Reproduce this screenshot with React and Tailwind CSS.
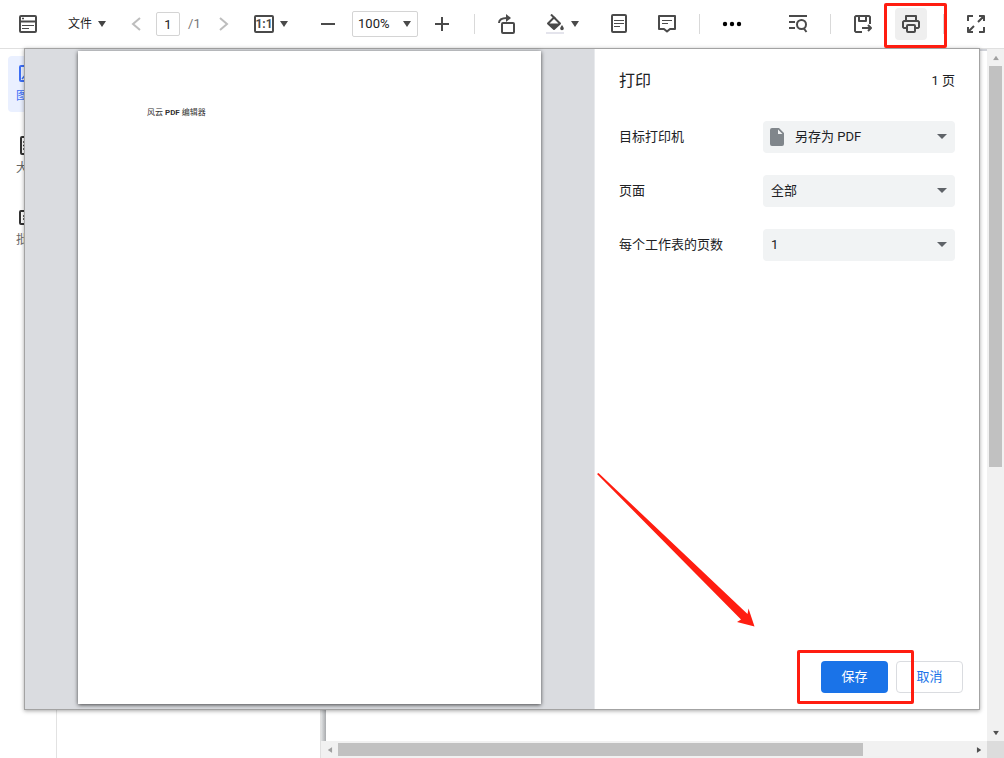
import { useState } from 'react';
import clsx from 'clsx';

const Icon = ({ children, className }) => (
  <svg viewBox="0 0 20 20" fill="none" stroke="currentColor" strokeWidth="2" strokeLinejoin="round"
    className={clsx('w-5 h-5 shrink-0', className)} aria-hidden="true">{children}</svg>
);

const Caret = ({ className }) => (
  <svg viewBox="0 0 8 6" className={clsx('w-2 h-1.5 shrink-0', className)} fill="currentColor" aria-hidden="true">
    <path d="M0 0h8L4 6z" />
  </svg>
);

const ToolButton = ({ label, children, className }) => (
  <button aria-label={label} className={clsx('w-8 h-8 shrink-0 flex items-center justify-center rounded', className)}>{children}</button>
);

const Divider = () => <span className="w-px h-5 bg-[#d9d9d9] shrink-0" />;

function Toolbar() {
  const [page, setPage] = useState('1');
  return (
    <header className="relative z-20 h-12 shrink-0 px-3 flex items-center justify-between text-[#4a4a4a]">
      <div className="flex items-center gap-4">
        <ToolButton label="侧边栏">
          <Icon><rect x="2" y="2" width="16" height="16" rx="1" /><path d="M2 7.5h16" /><path d="M4 11.5h12M4 14.5h7" strokeWidth="1" /><path d="M4 4.5h2" strokeWidth="1.5" /></Icon>
        </ToolButton>
        <div className="flex items-center gap-2">
          <button className="h-8 pl-2 pr-1.5 flex items-center gap-1.5 text-xs text-[#222]">文件<Caret className="text-[#444]" /></button>
          <div className="flex items-center gap-1">
            <ToolButton label="上一页" className="text-[#bdbdbd]"><Icon><path d="M14 4l-7 6 7 6" strokeLinejoin="miter" /></Icon></ToolButton>
            <input aria-label="页码" value={page} onChange={e => setPage(e.target.value)}
              className="w-6 h-6 border border-[#d4d4d4] rounded-xs text-center text-[13px] text-[#222]" />
            <span className="w-5 pl-1 text-[13px] text-[#777]">/1</span>
            <ToolButton label="下一页" className="text-[#bdbdbd]"><Icon><path d="M6 4l7 6-7 6" strokeLinejoin="miter" /></Icon></ToolButton>
          </div>
        </div>
        <div className="flex items-center gap-5 -ml-2">
          <button aria-label="实际大小" className="w-11 h-8 px-1.5 flex items-center gap-1.5">
            <span className="w-5 h-[18px] shrink-0 border-2 border-[#4a4a4a] rounded-xs flex items-center justify-center text-xs leading-none font-bold">1:1</span>
            <Caret />
          </button>
          <div className="flex items-center gap-2">
            <ToolButton label="缩小"><Icon><path d="M3 10h14" /></Icon></ToolButton>
            <div className="relative">
              <select aria-label="缩放" className="block w-[66px] h-[26px] pl-[5px] border border-[#d4d4d4] rounded-xs appearance-none text-[13px] text-[#222]">
                <option>100%</option>
              </select>
              <Caret className="absolute right-[7px] top-[10px] pointer-events-none" />
            </div>
            <ToolButton label="放大"><Icon><path d="M3 10h14M10 3v14" /></Icon></ToolButton>
          </div>
        </div>
        <Divider />
        <ToolButton label="旋转">
          <Icon>
            <rect x="5" y="9" width="12" height="10" rx="1" />
            <path d="M2 9c0-3 3-5 8-5" />
            <path d="M9 0l5 4-5 4z" fill="currentColor" stroke="none" />
          </Icon>
        </ToolButton>
        <button aria-label="背景颜色" className="w-11 h-8 px-1.5 flex items-center gap-1.5">
          <Icon>
            <path d="M9 3.5l6 6L9 15 3 9.500z" />
            <path d="M3 9.5h12L9 15z" fill="currentColor" stroke="none" />
            <path d="M6 .5l4 4" />
            <path d="M17 11c1 1.5 1.8 2.5 1.8 3.5a1.8 1.8 0 0 1-3.6 0c0-1 .8-2 1.8-3.5z" fill="currentColor" stroke="none" />
            <path d="M1 19h18" stroke="#e4e4ec" />
          </Icon>
          <Caret />
        </button>
        <div className="flex items-center gap-4 pl-1">
          <ToolButton label="单页"><Icon><rect x="3" y="1" width="14" height="17" rx="1" /><path d="M5 6.5h10M5 9.5h10M5 12.5h6" strokeWidth="1.2" /></Icon></ToolButton>
          <ToolButton label="注释"><Icon><path d="M2 2h16v13h-5l-3 2.5L7 15H2z" /><path d="M5 6.5h10M5 9.5h6" strokeWidth="1.2" /></Icon></ToolButton>
        </div>
        <Divider />
        <ToolButton label="更多" className="text-black">
          <Icon><g fill="currentColor" stroke="none"><circle cx="3" cy="10" r="2.2" /><circle cx="10" cy="10" r="2.2" /><circle cx="17" cy="10" r="2.2" /></g></Icon>
        </ToolButton>
      </div>

      <div className="flex items-center gap-4">
        <ToolButton label="查找"><Icon><path d="M1 2h18M1 8h6M1 14h6M15.5 14l3 4" /><circle cx="13.5" cy="10.5" r="4.5" /></Icon></ToolButton>
        <Divider />
        <ToolButton label="另存为"><Icon><path d="M9 18H3l-1-1V3l1-1h13l1 1v7M6 2v5h7V2M9 14h9" /><path d="M15 11l3 3-3 3" /></Icon></ToolButton>
        <div className="relative">
          <ToolButton label="打印" className="bg-[#efefef]">
            <Icon><path d="M5 7V2h10v5M5 14H3l-1-1V8l1-1h14l1 1v5l-1 1h-2" /><rect x="6" y="11" width="8" height="7" rx="1" /></Icon>
          </ToolButton>
          <span className="absolute -left-[11px] -right-5 -top-[5px] -bottom-2 border-3 border-[#ff1d10] rounded-xs pointer-events-none" />
        </div>
        <Divider />
        <ToolButton label="全屏"><Icon><path d="M2 7V2h5M18 13v5h-5M13 2h5v5M18 2l-6 6M7 18H2v-5M2 18l6-6" /></Icon></ToolButton>
      </div>
    </header>
  );
}

const tabs = [
  { label: '图片', active: true, icon: <><rect x="2" y="2" width="16" height="15" rx="1" /><path d="M4 15l5-6 3 4 2-2 3 4" strokeWidth="1.5" /></> },
  { label: '大纲', icon: <><rect x="3" y="1" width="14" height="17" rx="1" /><path d="M5 6h10M5 9.5h10M5 13h10" strokeWidth="1.5" /></> },
  { label: '批注', icon: <><rect x="2" y="3" width="16" height="13" rx="1" /><path d="M5 8h10M5 11h7" strokeWidth="1.5" /></> },
];

function Sidebar() {
  return (
    <nav className="w-[57px] shrink-0 border-r border-[#e2e2e2] px-2 pt-[7px] flex flex-col gap-4">
      {tabs.map(t => (
        <button key={t.label} className={clsx('h-14 shrink-0 rounded flex flex-col items-center justify-center gap-1 text-xs',
          t.active ? 'bg-[#eaf0ff] text-[#3d6ff5]' : 'text-[#666]')}>
          <Icon className={t.active ? '' : 'text-[#333]'}>{t.icon}</Icon>
          {t.label}
        </button>
      ))}
    </nav>
  );
}

function Viewer() {
  return (
    <main className="flex-1 min-w-0 flex">
      <div className="flex-1 min-w-0 flex flex-col">
        <div className="flex-1 border-t-2 border-[#d0d2d8] flex">
          <div className="w-[5px] bg-gradient-to-r from-[#e2e4e5] to-[#a9abae]" />
        </div>
        <div className="h-[17px] shrink-0 bg-[#f1f1f1] flex items-center">
          <span className="w-[17px] flex justify-center text-[#a0a0a0]"><Caret className="rotate-90 scale-75" /></span>
          <div className="flex-1 h-[13px]"><div className="w-[83%] h-full bg-[#c1c1c1]" /></div>
          <span className="w-[17px] flex justify-center text-[#505050]"><Caret className="-rotate-90 scale-75" /></span>
        </div>
      </div>
      <div className="w-[17px] shrink-0 bg-[#f1f1f1] flex flex-col items-center">
        <span className="h-[17px] flex items-center text-[#a0a0a0]"><Caret className="rotate-180 scale-75" /></span>
        <div className="flex-1 w-[13px]"><div className="h-[61%] w-full bg-[#c1c1c1]" /></div>
        <span className="h-[17px] flex items-center text-[#505050]"><Caret className="scale-75" /></span>
        <div className="h-[17px] w-full bg-[#dcdcdc]" />
      </div>
    </main>
  );
}

const fields = [
  { id: 'printer', label: '目标打印机', value: '另存为 PDF', file: true },
  { id: 'pages', label: '页面', value: '全部' },
  { id: 'per-sheet', label: '每个工作表的页数', value: '1' },
];

function PrintDialog() {
  return (
    <section role="dialog" aria-label="打印"
      className="absolute z-10 inset-x-6 inset-y-12 flex border border-[#a3a3a3] bg-white shadow-[0_1px_4px_rgba(0,0,0,0.35)]">
      <div className="flex-1 min-w-0 bg-[#dadce0] px-[53px] pt-0.5 pb-[5px] flex">
        <article className="flex-1 bg-white px-[69px] pt-14 shadow-[0_1px_4px_rgba(0,0,0,0.7)]">
          <p className="text-[8px] leading-3 text-[#333]">风云 <b>PDF</b> 编辑器</p>
        </article>
      </div>
      <form onSubmit={e => e.preventDefault()} className="relative w-[385px] shrink-0 border-l border-[#e8eaed] flex flex-col text-[13px] text-[#202124]">
        <div className="h-[72px] px-6 pb-2 flex items-center justify-between">
          <h1 className="text-base">打印</h1>
          <span>1 页</span>
        </div>
        <div className="px-6 flex flex-col gap-[22px]">
          {fields.map(f => (
            <div key={f.id} className="flex items-center justify-between">
              <label htmlFor={f.id}>{f.label}</label>
              <div className="relative">
                <select id={f.id} className={clsx('block w-48 h-8 rounded bg-[#f1f3f4] appearance-none', f.file ? 'pl-8' : 'pl-2')}>
                  <option>{f.value}</option>
                </select>
                {f.file && (
                  <svg viewBox="0 0 14 18" className="absolute left-[7px] top-[7px] w-3.5 h-[18px] pointer-events-none" fill="#80868b" aria-hidden="true">
                    <path d="M2 0h7l5 5v11a2 2 0 0 1-2 2H2a2 2 0 0 1-2-2V2a2 2 0 0 1 2-2zm6 1.5V6h4.5z" fillRule="evenodd" />
                  </svg>
                )}
                <svg viewBox="0 0 10 5" className="absolute right-2 top-[13px] w-2.5 h-[5px] pointer-events-none" fill="#5f6368" aria-hidden="true"><path d="M0 0h10L5 5z" /></svg>
              </div>
            </div>
          ))}
        </div>
        <svg viewBox="0 0 158 154" className="absolute left-0.5 bottom-[82px] w-[158px] h-[154px] pointer-events-none" fill="#ff1d10" aria-hidden="true">
          <path d="M0 1L1.5 0 150.5 141l1-5.5 6 18-17.5-4.5 4-2.500z" />
        </svg>
        <div className="mt-auto p-4 flex justify-end gap-2">
          <div className="relative">
            <button type="submit" className="block w-[67px] h-8 rounded bg-[#1a73e8] text-white">保存</button>
            <span className="absolute z-10 -inset-y-[11px] -left-6 -right-[26px] border-3 border-[#ff1d10] rounded-xs pointer-events-none" />
          </div>
          <button type="button" className="w-[67px] h-8 rounded border border-[#dadce0] text-[#1a73e8]">取消</button>
        </div>
      </form>
    </section>
  );
}

export default function App() {
  return (
    <div className="relative h-screen flex flex-col overflow-hidden bg-white font-[Roboto,'Noto_Sans_CJK_SC',sans-serif]">
      <Toolbar />
      <div className="flex-1 min-h-0 flex border-t border-[#e0e0e0]">
        <Sidebar />
        <aside className="w-[264px] shrink-0 border-r border-[#e0e0e0]" />
        <Viewer />
      </div>
      <PrintDialog />
    </div>
  );
}
